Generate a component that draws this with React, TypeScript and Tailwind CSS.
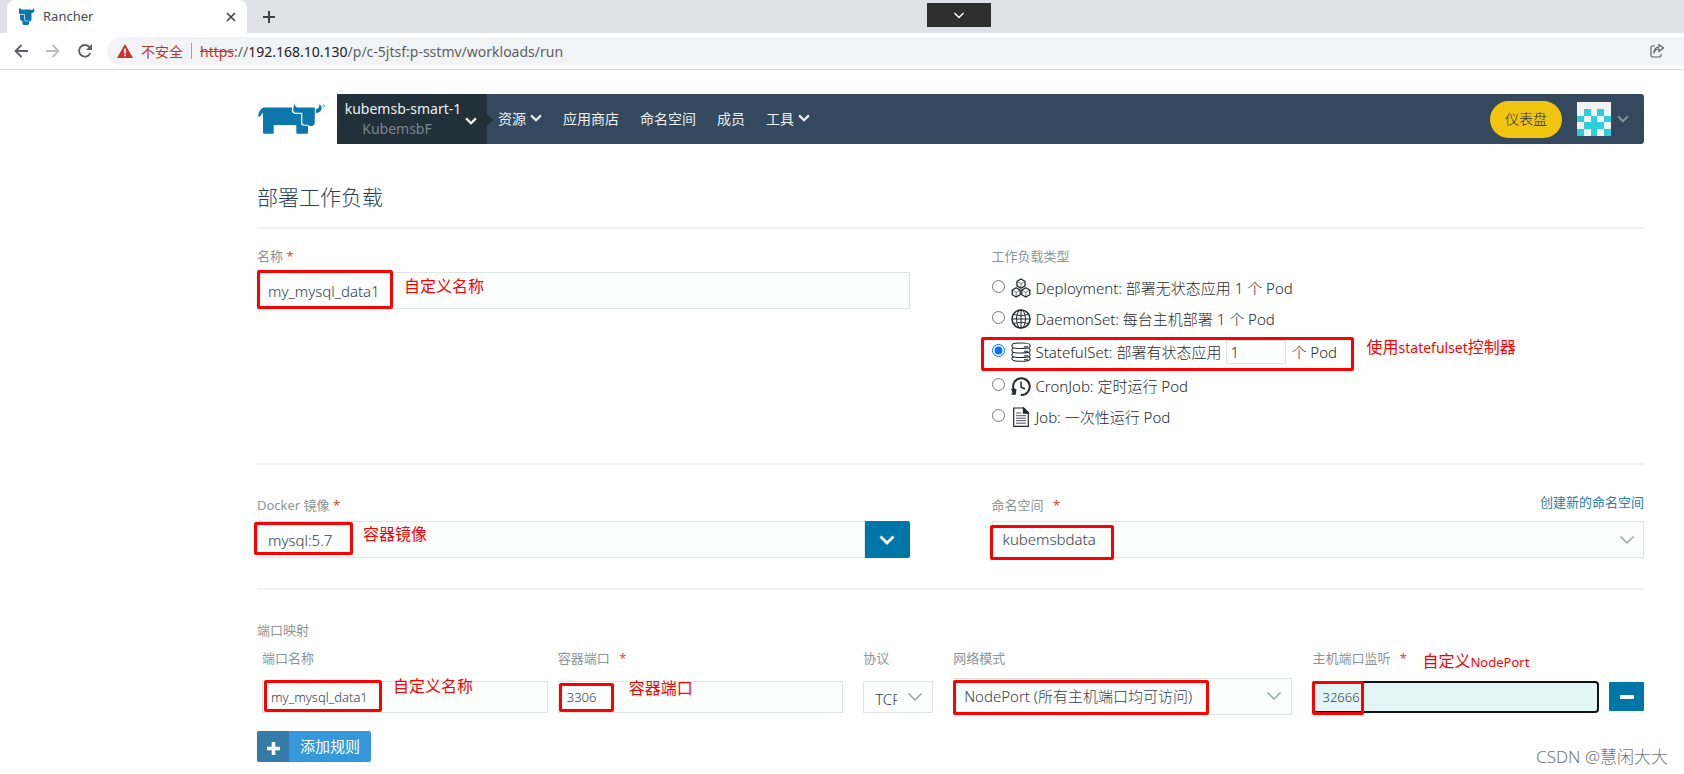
import React from "react";

const PAGE_FONT = "font-['Noto_Sans','Noto_Sans_CJK_SC',sans-serif]";

function Chevron({ className, stroke = 2 }: { className: string; stroke?: number }) {
  return (
    <svg viewBox="0 0 16 10" className={className} fill="none" stroke="currentColor" strokeWidth={stroke} aria-hidden="true">
      <path d="M1.5 1.5 8 8l6.5-6.5" />
    </svg>
  );
}

function CowLogo() {
  return (
    <svg viewBox="0 0 68 31" className="ml-px h-[31px] w-[68px]" fill="#0b77ab" role="img" aria-label="Rancher">
      <path d="M5.500 3.500H34v2.700Q34 10 38 10h5v8.500q0 3.300 3.300 3.300H50V28.500q0 1.200-1.200 1.200H39.500q-1.200 0-1.200-1.200V21H15.700v7.500q0 1.200-1.200 1.200H6.200Q5 29.700 5 28.500V8.500L1.500 13 0 12Q1.500 4.500 5.500 3.500Z" />
      <path d="M36.500 0Q37.500 3.500 39.500 3.500H56.800V18Q56.800 22 53 22q-2 0-3.500-1.200H46.500Q44.300 20.800 44.300 18.500V8.700H38Q35.200 8.700 35.200 5.500 35.200 2 36.500 0Z" />
      <path d="M61.500 0Q64.500 3 63.200 6 62 8.700 57.800 9V5.500Q61.500 4.500 61.500 0Z" />
      <circle cx="65.800" cy="2" r="1.200" fill="none" stroke="#0b77ab" strokeWidth=".5" />
    </svg>
  );
}

function CowHead() {
  return (
    <svg viewBox="0 0 16 17" className="h-[17px] w-4" fill="#0b77ab" aria-hidden="true">
      <path d="M1 0l1.500 1.500h9L12 2h1.500L15 0q1.500 4.500-2.500 5v6.500q0 2-2.500 2v2.500l-1 1H4.500l-1-1V13.500L1 11.500V6L0 5V1z" />
      <path d="M1 6.500h4.500v5q0 1.500 2 1.500H9" fill="none" stroke="#d5eaf3" strokeWidth=".8" />
    </svg>
  );
}

function BrowserChrome() {
  return (
    <header>
      <div className="relative flex h-[33px] items-stretch bg-[#dee1e5]">
        <div className="ml-[7px] flex w-60 items-center rounded-t-lg bg-white pr-[11px] pl-3">
          <CowHead />
          <span className="ml-2 flex-1 text-[13px] text-[#45494d]">Rancher</span>
          <button aria-label="关闭标签页" className="text-[#3c4043]">
            <svg viewBox="0 0 10 10" className="size-[10px]" stroke="currentColor" strokeWidth="1.6">
              <path d="M1 1l8 8M9 1 1 9" />
            </svg>
          </button>
        </div>
        <button aria-label="新标签页" className="ml-4 text-[#3c4043]">
          <svg viewBox="0 0 12 12" className="size-3" stroke="currentColor" strokeWidth="2">
            <path d="M6 0v12M0 6h12" />
          </svg>
        </button>
        <div className="absolute top-[3px] left-[55%] ml-px flex h-6 w-16 items-center justify-center bg-[#2f2f2f] text-white">
          <Chevron className="h-[7px] w-3" />
        </div>
      </div>
      <div className="flex h-[37px] items-center border-b border-[#d9dbdd] bg-white pl-[14px] text-[#5b5f63]">
        <button aria-label="后退">
          <svg viewBox="0 0 14 14" className="size-[14px]" fill="none" stroke="currentColor" strokeWidth="1.8">
            <path d="M14 7H1.500M7.500 1l-6 6 6 6" />
          </svg>
        </button>
        <button aria-label="前进" className="ml-[18px] text-[#babcbe]">
          <svg viewBox="0 0 14 14" className="size-[14px]" fill="none" stroke="currentColor" strokeWidth="1.800">
            <path d="M0 7h12.500M6.500 1l6 6-6 6" />
          </svg>
        </button>
        <button aria-label="重新加载" className="ml-[18px]">
          <svg viewBox="0 0 14 14" className="size-[14px]" fill="none" stroke="currentColor" strokeWidth="1.900">
            <path d="M12.300 9A5.800 5.800 0 1 1 11.500 3.200L13 5" />
            <path d="M14 0v6H8z" fill="currentColor" stroke="none" />
          </svg>
        </button>
        <div className="ml-[15px] flex h-7 flex-1 items-center overflow-hidden rounded-l-full bg-[#f1f3f4] pl-[10px] text-[14px]">
          <svg viewBox="0 0 16 14" className="h-[14px] w-4" aria-hidden="true">
            <path d="M8 0l8 14H0z" fill="#c5372c" />
            <path d="M8 4.500v5M8 10.500v1.700" stroke="#fff" strokeWidth="1.600" />
          </svg>
          <span className="ml-2 text-[#b23a30]">不安全</span>
          <span className="mx-2 h-4 w-px bg-[#a3a6a9]" />
          <span className="whitespace-nowrap">
            <span className="text-[#c5372c] line-through">https</span>://<span className="text-[#202124]">192.168.10.130</span>
            /p/c-5jtsf:p-sstmv/workloads/run
          </span>
          <button aria-label="分享" className="mr-5 ml-auto">
            <svg viewBox="0 0 14 14" className="size-[14px]" fill="none" stroke="currentColor" strokeWidth="1.200">
              <path d="M5 2H2.500Q1 2 1 3.500v8Q1 13 2.500 13h7q1.500 0 1.500-1.500V10" />
              <path d="M4 9.500q.5-4.500 5-4.500v2.500l4.500-3.700L9 .700V3Q4 3.200 4 9.500Z" />
            </svg>
          </button>
        </div>
      </div>
    </header>
  );
}

const AVATAR = ["00000", "01010", "10101", "01110", "10101"];

function NavBar() {
  return (
    <nav className="mt-6 flex h-[50px] items-center">
      <a href="#home" className="w-20">
        <CowLogo />
      </a>
      <div className="flex h-full flex-1 items-center rounded-r-[3px] bg-[#34495e] text-[14px] text-[#ecf0f1]">
        <button className="relative flex h-full w-[150px] items-center bg-[#22303a] pl-[10px]">
          <span className="flex w-28 flex-col items-center leading-[20px] whitespace-nowrap">
            <span>kubemsb-smart-1</span>
            <span className="pr-3 text-[#7d868c]">KubemsbF</span>
          </span>
          <Chevron className="mt-1 ml-[6px] h-2 w-3 text-white" stroke={3} />
          <span className="absolute top-5 left-full border-y-[6px] border-l-[6px] border-y-transparent border-l-[#22303a]" />
        </button>
        <div className="flex flex-1 items-center gap-[21px] pb-[2px] pl-[11px]">
          <button className="flex items-center gap-1">
            资源
            <Chevron className="h-2 w-3" stroke={3} />
          </button>
          <a href="#apps">应用商店</a>
          <a href="#namespaces">命名空间</a>
          <a href="#members">成员</a>
          <button className="flex items-center gap-1">
            工具
            <Chevron className="h-2 w-3" stroke={3} />
          </button>
        </div>
        <a href="#dashboard" className="flex h-[37px] w-[72px] items-center justify-center rounded-full bg-[#f1c40f] pb-[2px] font-light text-[#222b2b]">
          仪表盘
        </a>
        <button aria-label="用户菜单" className="mr-[15px] ml-[15px] flex items-center gap-[6px] text-[#8b99a3]">
          <svg viewBox="0 0 5 5" className="size-[34px] bg-[#f2f2f2]" shapeRendering="crispEdges" preserveAspectRatio="none">
            {AVATAR.map((row, y) =>
              [...row].map((c, x) => (c === "1" ? <rect key={`${x}${y}`} x={x} y={y} width="1" height="1" fill="#2ccfdb" /> : null))
            )}
          </svg>
          <Chevron className="h-2 w-3" stroke={2.5} />
        </button>
      </div>
    </nav>
  );
}

function Mark({ className }: { className: string }) {
  return <span className={`pointer-events-none absolute rounded-[2px] border-[3px] border-[#fe0000] ${className}`} />;
}

function Note({ className, children }: { className: string; children: React.ReactNode }) {
  return (
    <span className={`pointer-events-none absolute text-[16px] leading-[20px] font-normal whitespace-nowrap text-[#fe0000] ${className}`}>
      {children}
    </span>
  );
}

function Star() {
  return <span className="text-[#e0483c]">*</span>;
}

const label = "block h-5 text-[13px] leading-[20px] text-[#8b9597]";
const field = "w-full border border-[#dfe4e6] bg-[#fcfefe] text-[#35404c] outline-none";

const ICONS: Record<string, React.ReactNode> = {
  deployment: (
    <g strokeWidth="1.3">
      <path d="M10 1l4 2.300v4.600l-4 2.300-4-2.300V3.300zM5.200 9.800l4 2.300v4.600l-4 2.300-4-2.300v-4.600zM14.800 9.800l4 2.300v4.600l-4 2.300-4-2.300v-4.600z" strokeWidth="1.300" />
      <path d="M10 5.600v4.200M10 5.600 6.500 3.700M10 5.600l3.500-1.900M5.200 14.400v4.200M5.200 14.400l-3.500-2M5.200 14.400l3.500-2M14.800 14.400v4.200M14.800 14.400l-3.500-2M14.800 14.400l3.500-2" strokeWidth=".6" />
    </g>
  ),
  daemon: (
    <g strokeWidth="1">
      <circle cx="10" cy="10" r="9" strokeWidth="1.500" />
      <ellipse cx="10" cy="10" rx="4.500" ry="9" />
      <path d="M10 1v18M1 10h18M2.500 5.500q7.500 2.600 15 0M2.500 14.500q7.500-2.600 15 0" />
    </g>
  ),
  stateful: (
    <g strokeWidth="1.100">
      <path d="M1 3q0-2 9-2t9 2v1.500q0 2-9 2t-9-2zM1 7.500V9q0 2 9 2t9-2V7.500M1 12v1.500q0 2 9 2t9-2V12M1 16v1q0 2.300 9 2.300t9-2.300v-1M1 7.500l1-1.500M19 7.500 18 6M1 12l1-1.500M19 12l-1-1.500M1 16l1-1M19 16l-1-1" />
      <path d="M13 4.800h4M13 9.300h4M13 13.700h4M13 17.800h4" />
    </g>
  ),
  cron: (
    <g>
      <path d="M3.500 15.500A8.300 8.300 0 1 1 8 18.700" strokeWidth="2" transform="rotate(-12 10 10)" />
      <path d="M10 5.500V11l4 2" strokeWidth="1.500" />
      <path d="M0 12.500l5.500.500L4.500 19 0 18.500l1.500-2z" fill="currentColor" stroke="none" />
    </g>
  ),
  job: (
    <g strokeWidth="1.200">
      <path d="M2.700 1h10L17.300 5.500V19.300H2.700zM12.500 1v5h4.800" />
      <path d="M5 6h5M5 8.700h10M5 11.200h10M5 13.700h10M5 16.200h10" strokeWidth=".8" />
      <path d="M12.500 1v5h4.800z" fill="currentColor" />
    </g>
  ),
};

function KindRow({ id, children, trailing, tall }: { id: string; children: React.ReactNode; trailing?: React.ReactNode; tall?: boolean }) {
  return (
    <div className={`relative flex items-center text-[#23292e] ${tall ? "h-9" : "h-[31px]"}`}>
      <input type="radio" name="kind" id={id} defaultChecked={tall} className="mb-[3px] size-[13px]" />
      <label htmlFor={id} className="flex items-center text-[15px] leading-[20px] font-light whitespace-nowrap">
        <svg viewBox="0 0 20 20" className="mr-[5px] ml-[6px] size-5" fill="none" stroke="currentColor" aria-hidden="true">
          {ICONS[id]}
        </svg>
        {children}
      </label>
      {trailing}
    </div>
  );
}

function General() {
  return (
    <section className="grid grid-cols-2 gap-x-[82px] border-t-2 border-[#ecf0f1] pt-[17px] pb-[31px]">
      <div>
        <label htmlFor="name" className={label}>
          名称 <Star />
        </label>
        <div className="relative mt-[6px]">
          <input id="name" defaultValue="my_mysql_data1" className={`${field} h-[37px] px-[10px] text-[15px] font-light`} />
          <Mark className="-top-[2px] left-0 h-[39px] w-[136px]" />
          <Note className="top-1 left-[147px]">自定义名称</Note>
        </div>
      </div>
      <fieldset>
        <legend className={`${label} mb-[6px]`}>工作负载类型</legend>
        <KindRow id="deployment">Deployment: 部署无状态应用 1 个 Pod</KindRow>
        <KindRow id="daemon">DaemonSet: 每台主机部署 1 个 Pod</KindRow>
        <KindRow
          id="stateful"
          tall
          trailing={
            <>
              <input aria-label="Pod 数量" defaultValue="1" className="mx-[5px] h-6 w-[60px] border border-[#dfe4e6] bg-[#fcfefe] px-[3px] text-[15px] font-light outline-none" />
              <span className="text-[15px] font-light">个 Pod</span>
              <Mark className="top-[3px] -left-[11px] h-[34px] w-[373px]" />
              <Note className="top-[3px] left-[375px]">
                使用<span className="text-[14px]">statefulset</span>控制器
              </Note>
            </>
          }
        >
          StatefulSet: 部署有状态应用
        </KindRow>
        <KindRow id="cron">CronJob: 定时运行 Pod</KindRow>
        <KindRow id="job">Job: 一次性运行 Pod</KindRow>
      </fieldset>
    </section>
  );
}

function ImageAndNamespace() {
  return (
    <section className="grid grid-cols-2 gap-x-[82px] border-t-2 border-[#f0f1f2] py-[30px]">
      <div>
        <label htmlFor="image" className={label}>
          Docker 镜像 <Star />
        </label>
        <div className="relative mt-[6px] flex">
          <input id="image" defaultValue="mysql:5.7" className={`${field} h-[37px] flex-1 px-[10px] text-[15px] font-light`} />
          <button aria-label="选择镜像" className="flex h-[37px] w-[45px] items-center justify-center rounded-r-[2px] bg-[#0075a8] text-white">
            <Chevron className="h-[10px] w-4" stroke={2.8} />
          </button>
          <Mark className="top-[1px] -left-[3px] h-[33px] w-[99px]" />
          <Note className="top-[3px] left-[106px]">容器镜像</Note>
        </div>
      </div>
      <div>
        <div className="flex justify-between">
          <label htmlFor="ns" className={label}>
            命名空间 <span className="ml-[6px]"><Star /></span>
          </label>
          <a href="#new-namespace" className="-mt-[3px] text-[13px] leading-[20px] text-[#2a7cb3]">
            创建新的命名空间
          </a>
        </div>
        <div className="relative mt-[6px]">
          <select id="ns" className={`${field} h-[37px] appearance-none px-[10px] text-[15px] font-light`}>
            <option>kubemsbdata</option>
          </select>
          <Chevron className="absolute top-[14px] right-[9px] h-[10px] w-4 text-[#9aa5a7]" stroke={1.5} />
          <Mark className="top-1 -left-[2px] h-[35px] w-[124px]" />
        </div>
      </div>
    </section>
  );
}

function Ports() {
  const th = "h-[30px] p-0 text-left align-top font-normal";
  return (
    <section className="border-t-2 border-[#f0f1f2] pt-[30px]">
      <h2 className={label}>端口映射</h2>
      <div className="mt-2 pl-[5px]">
        <table className="w-full table-fixed border-collapse">
          <colgroup>
            <col className="w-[21.4%]" />
            <col className="w-[22.1%]" />
            <col className="w-[90px]" />
            <col className="w-[26%]" />
            <col />
            <col className="w-[35px]" />
          </colgroup>
          <thead>
            <tr>
              <th className={th}><label htmlFor="p-name" className={label}>端口名称</label></th>
              <th className={th}><label htmlFor="p-port" className={label}>容器端口 <span className="ml-[6px]"><Star /></span></label></th>
              <th className={th}><label htmlFor="p-proto" className={label}>协议</label></th>
              <th className={th}><label htmlFor="p-mode" className={label}>网络模式</label></th>
              <th className={th}>
                <span className="relative block">
                  <label htmlFor="p-host" className={label}>主机端口监听 <span className="ml-[6px]"><Star /></span></label>
                  <Note className="top-[3px] left-[110px]">
                    自定义<span className="text-[13px]">NodePort</span>
                  </Note>
                </span>
              </th>
              <th className={th} />
            </tr>
          </thead>
          <tbody>
            <tr>
              <td className="p-0 pr-[10px]">
                <div className="relative flex">
                  <input id="p-name" defaultValue="my_mysql_data1" className={`${field} h-8 px-[8px] text-[13px] font-light`} />
                  <Mark className="-top-[1px] left-[2px] h-8 w-[118px]" />
                  <Note className="-top-[5px] left-[131px]">自定义名称</Note>
                </div>
              </td>
              <td className="p-0 pr-5">
                <div className="relative flex">
                  <input id="p-port" defaultValue="3306" className={`${field} h-8 px-[8px] text-[13px] font-light`} />
                  <Mark className="top-[2px] left-[1px] h-[29px] w-[55px]" />
                  <Note className="-top-[3px] left-[71px]">容器端口</Note>
                </div>
              </td>
              <td className="p-0 pr-5">
                <div className="relative flex">
                  <select id="p-proto" className={`${field} h-8 appearance-none pt-[5px] pr-[35px] pl-[11px] text-[15px] font-light`}>
                    <option>TCP</option>
                  </select>
                  <Chevron className="absolute top-[11px] right-[10px] h-[10px] w-4 text-[#9aa5a7]" stroke={1.5} />
                </div>
              </td>
              <td className="p-0 pr-5">
                <div className="relative flex">
                  <select id="p-mode" className={`${field} h-[37px] appearance-none px-[10px] text-[15px] font-light`}>
                    <option>NodePort (所有主机端口均可访问)</option>
                  </select>
                  <Chevron className="absolute top-[13px] right-[10px] h-[10px] w-4 text-[#9aa5a7]" stroke={1.5} />
                  <Mark className="top-[2px] left-0 h-[35px] w-64" />
                </div>
              </td>
              <td className="p-0 pr-[10px]">
                <div className="relative flex">
                  <input id="p-host" defaultValue="32666" className="h-8 w-full rounded-[4px] border-2 border-[#101314] bg-[#e3f5f4] px-2 text-[13px] font-light text-[#35404c] outline-none" />
                  <Mark className="top-0 left-0 h-[34px] w-[52px]" />
                </div>
              </td>
              <td className="p-0">
                <button aria-label="删除规则" className="flex h-[29px] w-[35px] items-center justify-center rounded-[1px] bg-[#0075a8]">
                  <span className="h-1 w-[14px] rounded-[1px] bg-white" />
                </button>
              </td>
            </tr>
          </tbody>
        </table>
      </div>
      <button className="mt-4 flex h-[31px] items-stretch rounded-[2px] bg-[#3498db] text-[15px] text-white">
        <span className="flex w-8 items-center justify-center rounded-l-[2px] bg-[#347ba8]">
          <svg viewBox="0 0 13 13" className="mt-1 size-[13px]" stroke="currentColor" strokeWidth="3.600" aria-hidden="true">
            <path d="M6.500 0v13M0 6.500h13" />
          </svg>
        </span>
        <span className="flex w-[82px] items-center justify-center">添加规则</span>
      </button>
    </section>
  );
}

export default function App() {
  return (
    <div className={`relative bg-white ${PAGE_FONT}`}>
      <BrowserChrome />
      <main className="pr-10 pb-3 pl-[257px]">
        <NavBar />
        <h1 className="mt-[38px] mb-[15px] text-[21px] leading-[30px] font-light text-[#2c4156]">部署工作负载</h1>
        <General />
        <ImageAndNamespace />
        <Ports />
      </main>
      <span className="absolute right-4 bottom-[5px] text-[17px] leading-[24px] font-light text-[#737576]">CSDN @慧闲大大</span>
    </div>
  );
}
